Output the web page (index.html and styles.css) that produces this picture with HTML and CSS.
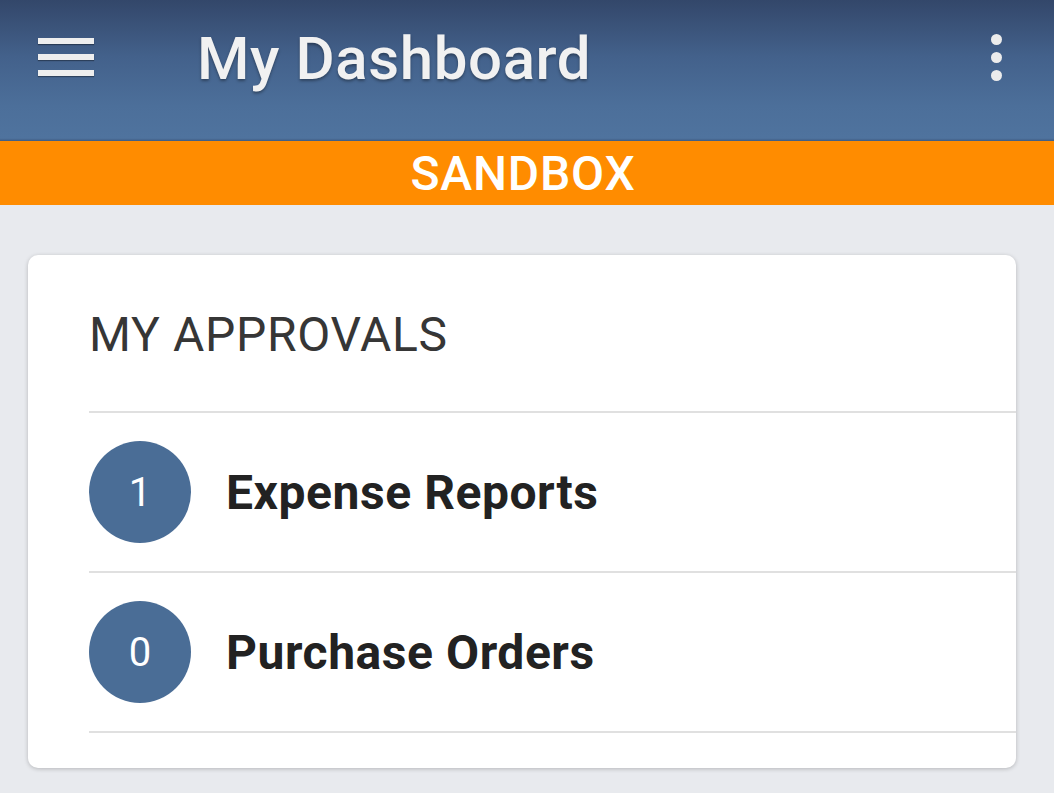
FILE: index.html
```html
<!DOCTYPE html>
<html lang="en">
<head>
<meta charset="utf-8">
<title>My Dashboard</title>
<link rel="stylesheet" href="styles.css">
</head>
<body>
<header class="appbar">
  <div class="toolbar">
    <div class="hamburger" aria-label="Menu">
      <span></span><span></span><span></span>
    </div>
    <h1 class="title">My Dashboard</h1>
    <div class="kebab" aria-label="More">
      <span></span><span></span><span></span>
    </div>
  </div>
</header>
<div class="env-band">SANDBOX</div>
<main class="content">
  <section class="card">
    <h2 class="card-title">MY APPROVALS</h2>
    <ul class="list">
      <li class="row">
        <span class="badge">1</span>
        <span class="label">Expense Reports</span>
      </li>
      <li class="row">
        <span class="badge">0</span>
        <span class="label">Purchase Orders</span>
      </li>
    </ul>
  </section>
</main>
</body>
</html>
```
FILE: styles.css
```css
* { box-sizing: border-box; }
html, body {
  margin: 0;
  padding: 0;
  background: #e8eaee;
  font-family: Roboto, "Liberation Sans", Arial, sans-serif;
  height: 100%;
  overflow: hidden;
}
.appbar {
  height: 141px;
  background: linear-gradient(to bottom, #33476a 0%, #43618b 40%, #4c6f9a 75%, #4f739e 98%, #3f5c83 100%);
}
.toolbar {
  height: 114px;
  display: flex;
  align-items: center;
  padding-left: 38px;
  padding-right: 52px;
}
.hamburger {
  width: 56px;
  display: flex;
  flex-direction: column;
  gap: 10px;
}
.hamburger span {
  display: block;
  height: 6px;
  background: #eeeeee;
  box-shadow: 0 1px 1px rgba(0,0,0,0.35);
}
.title {
  margin: 0 0 0 103px;
  flex: 1;
  font-size: 60px;
  font-weight: 500;
  letter-spacing: 0.6px;
  color: #f1f1f1;
  line-height: 1;
  text-shadow: 0 2px 3px rgba(0,0,0,0.35);
  position: relative;
  top: 2px;
}
.kebab {
  width: 11px;
  display: flex;
  flex-direction: column;
  gap: 7px;
}
.kebab span {
  display: block;
  width: 11px;
  height: 11px;
  border-radius: 50%;
  background: #ececec;
}
.env-band {
  height: 64px;
  background: #ff8c00;
  color: #ffffff;
  font-size: 48px;
  font-weight: 500;
  letter-spacing: 0.8px;
  display: flex;
  align-items: center;
  justify-content: center;
  padding-right: 8px;
}
.content {
  padding: 50px 38px 0 28px;
}
.card {
  background: #ffffff;
  border-radius: 10px;
  box-shadow: 0 1px 4px rgba(0,0,0,0.22);
  padding: 0 0 35px 61px;
}
.card-title {
  margin: 0;
  padding: 52px 0 48px 0;
  font-size: 48px;
  line-height: 56px;
  font-weight: 400;
  letter-spacing: 0.7px;
  color: #363636;
}
.list {
  list-style: none;
  margin: 0;
  padding: 0;
  border-bottom: 2px solid #e0e0e0;
}
.row {
  height: 160px;
  border-top: 2px solid #e0e0e0;
  display: flex;
  align-items: center;
  gap: 35px;
}
.badge {
  width: 102px;
  height: 102px;
  flex: none;
  border-radius: 50%;
  background: #4a6d96;
  color: #ffffff;
  font-size: 40px;
  display: flex;
  align-items: center;
  justify-content: center;
}
.label {
  font-size: 48px;
  font-weight: 700;
  letter-spacing: 0.55px;
  color: #222222;
}
```
